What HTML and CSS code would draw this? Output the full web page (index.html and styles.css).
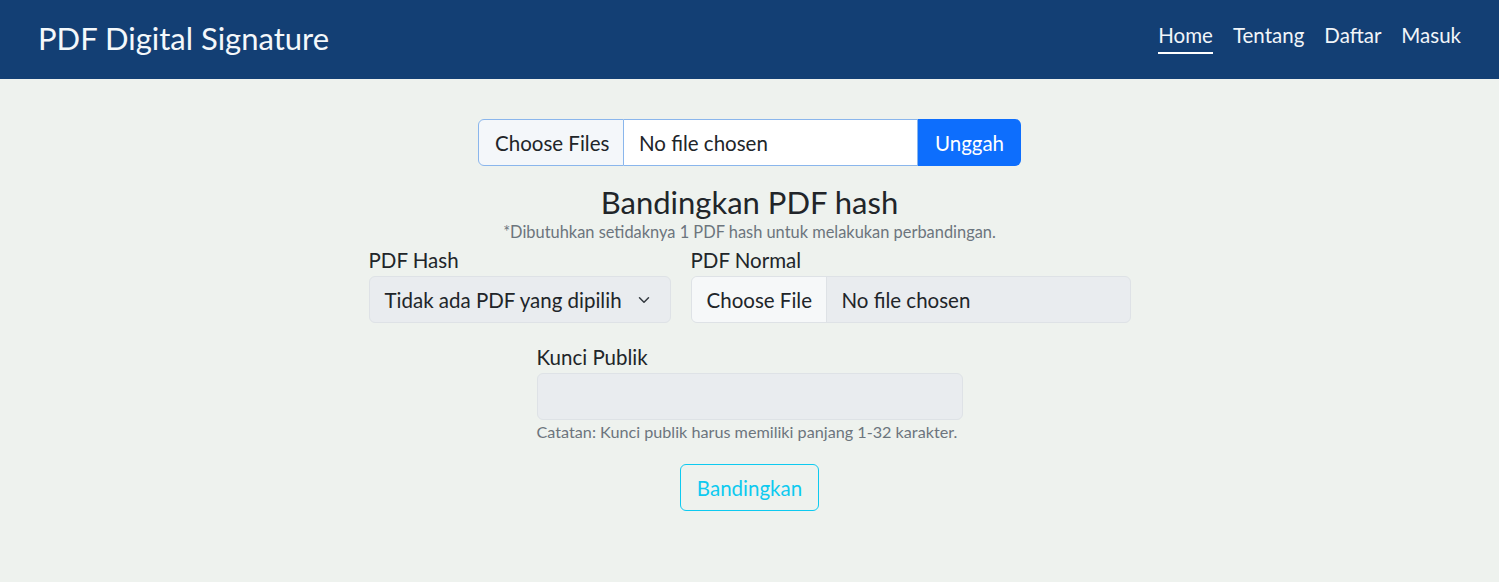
FILE: index.html
```html
<!DOCTYPE html>
<html lang="id">
<head>
<meta charset="utf-8">
<title>PDF Digital Signature</title>
<link rel="stylesheet" href="styles.css">
</head>
<body>
<nav class="navbar">
  <a class="brand" href="#">PDF Digital Signature</a>
  <ul class="nav">
    <li><a class="nav-link active" href="#">Home</a></li>
    <li><a class="nav-link" href="#">Tentang</a></li>
    <li><a class="nav-link" href="#">Daftar</a></li>
    <li><a class="nav-link" href="#">Masuk</a></li>
  </ul>
</nav>
<main class="main">
  <form class="upload">
    <div class="file-group">
      <span class="file-btn">Choose Files</span>
      <span class="file-text">No file chosen</span>
      <button type="button" class="btn-primary">Unggah</button>
    </div>
  </form>
  <section class="compare">
    <h3 class="title">Bandingkan PDF hash</h3>
    <p class="note">*Dibutuhkan setidaknya 1 PDF hash untuk melakukan perbandingan.</p>
    <div class="row">
      <div class="col col-hash">
        <label class="label">PDF Hash</label>
        <div class="select">
          <span>Tidak ada PDF yang dipilih</span>
          <svg class="chev" width="16" height="12" viewBox="0 0 16 16"><path d="M2 5l6 6 6-6" fill="none" stroke="#343a40" stroke-width="2" stroke-linecap="round" stroke-linejoin="round"/></svg>
        </div>
      </div>
      <div class="col col-normal">
        <label class="label">PDF Normal</label>
        <div class="file-disabled">
          <span class="file-btn2">Choose File</span>
          <span class="file-text2">No file chosen</span>
        </div>
      </div>
    </div>
    <div class="key">
      <label class="label">Kunci Publik</label>
      <div class="input-disabled"></div>
      <div class="help">Catatan: Kunci publik harus memiliki panjang 1-32 karakter.</div>
    </div>
    <button type="button" class="btn-outline">Bandingkan</button>
  </section>
</main>
</body>
</html>
```
FILE: styles.css
```css
* { box-sizing: border-box; }
body {
  margin: 0;
  background: #eef2ee;
  font-family: "Lato", "Noto Sans", sans-serif;
  color: #212529;
  font-size: 20.5px;
}
.navbar {
  height: 79px;
  background: #133f74;
  display: flex;
  align-items: center;
  justify-content: space-between;
  padding: 0 38px;
}
.brand {
  color: #f4f8fb;
  text-decoration: none;
  font-size: 31px;
  padding-bottom: 4px;
}
.nav {
  list-style: none;
  margin: 0 0 6px;
  padding: 0;
  display: flex;
  gap: 20px;
}
.nav-link {
  color: #f1f5f9;
  text-decoration: none;
  font-size: 20.5px;
  display: block;
  padding: 4px 0 5px;
  border-bottom: 2px solid transparent;
}
.nav-link.active { border-bottom-color: #ffffff; }

.main {
  display: flex;
  flex-direction: column;
  align-items: center;
  padding-top: 40px;
}
.file-group {
  display: flex;
  width: 543px;
  height: 47px;
}
.file-btn {
  display: flex;
  align-items: center;
  padding: 0 16px;
  background: #f4f7fa;
  border: 1px solid #8ab6ec;
  border-radius: 6px 0 0 6px;
  width: 146px;
  white-space: nowrap;
}
.file-text {
  flex: 1;
  display: flex;
  align-items: center;
  padding: 0 15px;
  background: #fff;
  border: 1px solid #8ab6ec;
  border-left: none;
}
.btn-primary {
  width: 103px;
  border: none;
  background: #0d6efd;
  color: #fff;
  font: inherit;
  border-radius: 0 6px 6px 0;
}

.compare {
  display: flex;
  flex-direction: column;
  align-items: center;
}
.title {
  margin: 18px 0 0;
  font-weight: 400;
  font-size: 31px;
  line-height: 36px;
}
.note {
  margin: 2px 0 0;
  font-size: 16.4px;
  color: #6c757d;
  line-height: 20px;
}
.row {
  display: flex;
  gap: 20px;
  margin-top: 5px;
}
.label {
  display: block;
  line-height: 26px;
  margin-bottom: 3px;
}
.col-hash { width: 302px; }
.col-normal { width: 440px; }
.select {
  height: 47px;
  background: #e9ecef;
  border: 1px solid #dee2e6;
  border-radius: 6px;
  display: flex;
  align-items: center;
  justify-content: space-between;
  padding: 0 18px 0 15px;
  white-space: nowrap;
}
.chev { display: block; flex: none; }
.file-disabled {
  height: 47px;
  display: flex;
  background: #e9ecef;
  border: 1px solid #dee2e6;
  border-radius: 6px;
  overflow: hidden;
}
.file-btn2 {
  width: 135px;
  background: #f6f8f9;
  display: flex;
  align-items: center;
  padding: 0 15px;
  border-right: 1px solid #dee2e6;
  white-space: nowrap;
}
.file-text2 {
  display: flex;
  align-items: center;
  padding: 0 15px;
}
.key {
  width: 426px;
  margin-top: 21px;
}
.input-disabled {
  height: 47px;
  background: #e9ecef;
  border: 1px solid #dee2e6;
  border-radius: 6px;
}
.help {
  margin-top: 2px;
  font-size: 16.2px;
  color: #6c757d;
  line-height: 20px;
  white-space: nowrap;
}
.btn-outline {
  margin-top: 22px;
  height: 47px;
  width: 139px;
  background: transparent;
  border: 1px solid #0dcaf0;
  color: #0dcaf0;
  font: inherit;
  border-radius: 6px;
}
```
